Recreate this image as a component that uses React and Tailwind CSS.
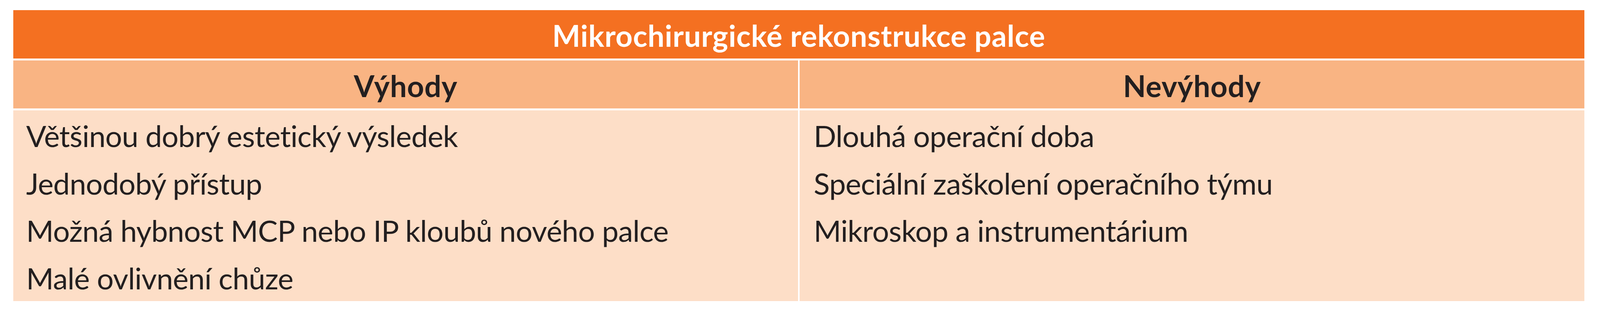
const advantages = [
  'Většinou dobrý estetický výsledek',
  'Jednodobý přístup',
  'Možná hybnost MCP nebo IP kloubů nového palce',
  'Malé ovlivnění chůze',
];

const disadvantages = [
  'Dlouhá operační doba',
  'Speciální zaškolení operačního týmu',
  'Mikroskop a instrumentárium',
];

export default function App() {
  return (
    <div className="min-h-[800px] w-[4112px] bg-white pt-[26px] pl-[34px] font-['Lato',_'Noto_Sans',_sans-serif] text-[#231f20]">
      <div className="flex w-[4022px] flex-col gap-y-[5px] bg-white">
        {/* Title */}
        <div className="h-[124px] bg-[#f47021] pt-[6px] text-center text-[76px] leading-[118px] font-bold tracking-[0.012em] text-white">
          Mikrochirurgické rekonstrukce palce
        </div>

        {/* Column headers */}
        <div className="grid grid-cols-2 gap-x-[4px]">
          <div className="h-[123px] bg-[#f9b483] pt-[6px] text-center text-[76px] leading-[118px] font-bold tracking-[0.01em]">
            Výhody
          </div>
          <div className="h-[123px] bg-[#f9b483] pt-[6px] text-center text-[76px] leading-[118px] font-bold tracking-[0.01em]">
            Nevýhody
          </div>
        </div>

        {/* Body */}
        <div className="grid grid-cols-2 gap-x-[4px]">
          <div className="h-[489px] bg-[#fddec7] pt-[4px] pl-[33px] text-[76px] leading-[121.5px] tracking-[-0.01em]">
            {advantages.map((t) => (
              <div key={t}>{t}</div>
            ))}
          </div>
          <div className="h-[489px] bg-[#fddec7] pt-[4px] pl-[36px] text-[76px] leading-[121.5px] tracking-[-0.01em]">
            {disadvantages.map((t) => (
              <div key={t}>{t}</div>
            ))}
          </div>
        </div>
      </div>
    </div>
  );
}
